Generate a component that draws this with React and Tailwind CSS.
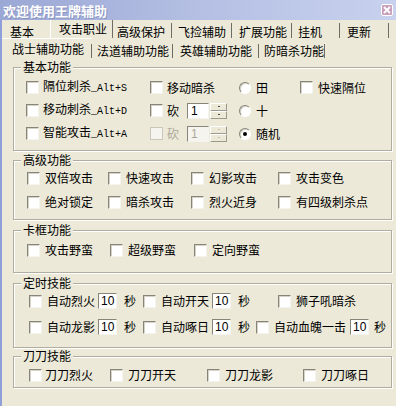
import React from 'react';

const Check = ({ disabled = false, className = '' }) => (
  <span
    className={`box-border block w-[13px] h-[13px] shrink-0 border ${
      disabled
        ? 'border-[#cac8bb] bg-[#f5f4ef]'
        : 'border-t-[#87857a] border-l-[#87857a] border-r-[#f4f3ee] border-b-[#f4f3ee] bg-white shadow-[inset_1px_1px_0_#d6d3c6]'
    } ${className}`}
  />
);

const Radio = ({ checked = false }) => (
  <span className="box-border flex w-[12px] h-[12px] shrink-0 items-center justify-center rounded-full border border-t-[#87857a] border-l-[#87857a] border-r-white border-b-white bg-white shadow-[inset_1px_1px_0_#d6d3c6]">
    {checked && <span className="block w-[4px] h-[4px] rounded-full bg-black" />}
  </span>
);

const Label = ({ children, gray = false, className = 'ml-[5px]' }) => (
  <span className={`${className} whitespace-nowrap leading-[12px] ${gray ? 'text-[#aca899]' : 'text-black'}`}>{children}</span>
);

const Alt = ({ children }) => (
  <span className="font-['Liberation_Mono',monospace] text-[10px]">{children}</span>
);

const NumBox = ({ value, className = '' }) => (
  <span
    className={`box-border flex items-center w-[19px] h-[16px] pl-[2px] bg-white border border-t-[#87857a] border-l-[#87857a] border-r-[#f4f3ee] border-b-[#f4f3ee] font-['Liberation_Sans',sans-serif] text-[12px] leading-[12px] ${className}`}
  >
    {value}
  </span>
);

const Spin = ({ disabled = false }) => (
  <span className="ml-[8px] flex items-center">
    <span
      className={`box-border flex items-center w-[22px] h-[16px] pl-[3px] border border-t-[#87857a] border-l-[#87857a] border-r-[#f4f3ee] border-b-[#f4f3ee] font-['Liberation_Sans',sans-serif] text-[12px] leading-[12px] ${
        disabled ? 'bg-[#f5f4ef] text-[#aca899]' : 'bg-white text-black'
      }`}
    >
      1
    </span>
    <span className="ml-[1px] flex flex-col w-[17px] h-[16px]">
      {[0, 1].map((i) => (
        <span
          key={i}
          className="box-border flex h-[8px] items-center justify-center border border-t-white border-l-white border-r-[#9d9a8c] border-b-[#9d9a8c] bg-[#ece9d8]"
        >
          <span className={`block w-[2px] h-[1px] ${disabled ? 'bg-[#c5c2b2]' : 'bg-[#4d4b44]'}`} />
        </span>
      ))}
    </span>
  </span>
);

const GroupBox = ({ title, height, className = '', children }) => (
  <div
    className={`box-border ml-[11px] w-[379px] border border-[#b0ad9e] shadow-[inset_1px_1px_0_#fff,1px_1px_0_#fff] ${className}`}
    style={{ height }}
  >
    <div className="-mt-[7px] ml-[7px] w-fit h-[12px] px-[2px] bg-[#ece9d8] leading-[12px]">{title}</div>
    {children}
  </div>
);

const Cell = ({ w, children }) => (
  <div className="flex items-center shrink-0" style={{ width: w }}>
    {children}
  </div>
);

const MainTab = ({ label, w, pl, selected, sep = true }) => (
  <div
    className={`box-border h-full shrink-0 ${selected ? 'pt-[3px] border-l border-l-white' : 'pt-[6px]'}`}
    style={{ width: w, paddingLeft: pl }}
  >
    <div className="relative h-full">
      <span className="leading-[12px] whitespace-nowrap">{label}</span>
      {sep && <span className="absolute right-0 top-[-3px] bottom-0 w-[1px] bg-[#6f6d63]" />}
    </div>
  </div>
);

export default function App() {
  return (
    <div className="w-[396px] h-[406px] overflow-hidden bg-[#ece9d8] font-['Noto_Sans_CJK_SC',sans-serif] text-[12px] leading-[12px] text-black">
      {/* title bar */}
      <div className="flex h-[20px] items-center justify-between bg-gradient-to-r from-[#9ba8d5] via-[#b4bfe3] to-[#c8d1ee] pl-[3px] pr-[3px]">
        <span className="text-[13px] font-bold leading-[13px] text-white [text-shadow:1px_1px_0_#8a94bf]">欢迎使用王牌辅助</span>
        <span className="box-border flex w-[12px] h-[12px] items-center justify-center rounded-[2px] border border-white bg-[#c9a0bd]">
          <svg width="8" height="8" viewBox="0 0 8 8">
            <path d="M1 1 L7 7 M7 1 L1 7" stroke="white" strokeWidth="1.8" />
          </svg>
        </span>
      </div>

      <div className="h-[386px] border-l-2 border-l-[#8f9fda]">
        {/* main tabs */}
        <div className="flex h-[18px]">
          <MainTab label="基本" w={48} pl={8} sep={false} />
          <MainTab label="攻击职业" w={63} pl={8} selected />
          <MainTab label="高级保护" w={59} pl={4} />
          <MainTab label="飞捡辅助" w={60} pl={6} />
          <MainTab label="扩展功能" w={60} pl={7} />
          <MainTab label="挂机" w={48} pl={6} />
          <MainTab label="更新" w={49} pl={7} />
        </div>

        {/* sub tabs */}
        <div className="flex h-[20px]">
          <div className="box-border h-full w-[90px] shrink-0 pt-[4px] pl-[10px] border-t border-t-white">
            <div className="relative h-full">
              <span className="leading-[12px]">战士辅助功能</span>
              <span className="absolute right-0 top-[1px] bottom-0 w-[1px] bg-[#6f6d63]" />
            </div>
          </div>
          {[
            ['法道辅助功能', 81, 5],
            ['英雄辅助功能', 86, 7],
            ['防暗杀功能', 66, 5],
          ].map(([label, w, pl]) => (
            <div key={label} className="box-border h-full shrink-0 pt-[7px]" style={{ width: w, paddingLeft: pl }}>
              <div className="relative h-full">
                <span className="leading-[12px] whitespace-nowrap">{label}</span>
                <span className="absolute right-0 top-[-1px] bottom-0 w-[1px] bg-[#6f6d63]" />
              </div>
            </div>
          ))}
        </div>

        {/* 基本功能 */}
        <GroupBox title="基本功能" height={84} className="mt-[9px]">
          <div className="mt-[3px] pl-[12px]">
            <div className="flex h-[23px] items-center">
              <Cell w={124}>
                <Check />
                <Label className="ml-[4px]">隔位刺杀<Alt>_Alt+S</Alt></Label>
              </Cell>
              <Cell w={89}>
                <Check />
                <Label className="ml-[4px]">移动暗杀</Label>
              </Cell>
              <Cell w={61}>
                <Radio />
                <Label>田</Label>
              </Cell>
              <Cell w={90}>
                <Check />
                <Label>快速隔位</Label>
              </Cell>
            </div>
            <div className="flex h-[23px] items-center">
              <Cell w={124}>
                <Check />
                <Label className="ml-[4px]">移动刺杀<Alt>_Alt+D</Alt></Label>
              </Cell>
              <Cell w={89}>
                <Check />
                <Label className="ml-[4px]">砍</Label>
                <Spin />
              </Cell>
              <Cell w={61}>
                <Radio />
                <Label>十</Label>
              </Cell>
            </div>
            <div className="flex h-[23px] items-center">
              <Cell w={124}>
                <Check />
                <Label className="ml-[4px]">智能攻击<Alt>_Alt+A</Alt></Label>
              </Cell>
              <Cell w={89}>
                <Check disabled />
                <Label className="ml-[4px]" gray>砍</Label>
                <Spin disabled />
              </Cell>
              <Cell w={61}>
                <Radio checked />
                <Label>随机</Label>
              </Cell>
            </div>
          </div>
        </GroupBox>

        {/* 高级功能 */}
        <GroupBox title="高级功能" height={60} className="mt-[9px]">
          <div className="pl-[13px]">
            <div className="flex h-[24px] items-center">
              <Cell w={81}><Check /><Label>双倍攻击</Label></Cell>
              <Cell w={83}><Check /><Label>快速攻击</Label></Cell>
              <Cell w={87}><Check /><Label>幻影攻击</Label></Cell>
              <Cell w={100}><Check /><Label>攻击变色</Label></Cell>
            </div>
            <div className="flex h-[24px] items-center">
              <Cell w={81}><Check /><Label>绝对锁定</Label></Cell>
              <Cell w={83}><Check /><Label>暗杀攻击</Label></Cell>
              <Cell w={87}><Check /><Label>烈火近身</Label></Cell>
              <Cell w={100}><Check /><Label>有四级刺杀点</Label></Cell>
            </div>
          </div>
        </GroupBox>

        {/* 卡框功能 */}
        <GroupBox title="卡框功能" height={43} className="mt-[10px]">
          <div className="mt-[2px] pl-[13px]">
            <div className="flex h-[24px] items-center">
              <Cell w={83}><Check /><Label>攻击野蛮</Label></Cell>
              <Cell w={84}><Check /><Label>超级野蛮</Label></Cell>
              <Cell w={100}><Check /><Label>定向野蛮</Label></Cell>
            </div>
          </div>
        </GroupBox>

        {/* 定时技能 */}
        <GroupBox title="定时技能" height={65} className="mt-[10px]">
          <div className="-mt-[1px] pl-[15px]">
            <div className="flex h-[26px] items-center">
              <Check />
              <Label>自动烈火</Label>
              <NumBox value="10" className="ml-[3px]" />
              <Label className="ml-[7px]">秒</Label>
              <Check className="ml-[7px]" />
              <Label>自动开天</Label>
              <NumBox value="10" className="ml-[3px]" />
              <Label className="ml-[7px]">秒</Label>
              <Check className="ml-[28px]" />
              <Label>狮子吼暗杀</Label>
            </div>
            <div className="flex h-[26px] items-center">
              <Check />
              <Label>自动龙影</Label>
              <NumBox value="10" className="ml-[3px]" />
              <Label className="ml-[7px]">秒</Label>
              <Check className="ml-[7px]" />
              <Label>自动啄日</Label>
              <NumBox value="10" className="ml-[3px]" />
              <Label className="ml-[7px]">秒</Label>
              <Check className="ml-[6px]" />
              <Label>自动血魄一击</Label>
              <NumBox value="10" className="ml-[4px]" />
              <Label className="ml-[5px]">秒</Label>
            </div>
          </div>
        </GroupBox>

        {/* 刀刀技能 */}
        <GroupBox title="刀刀技能" height={32} className="mt-[8px]">
          <div className="mt-[1px] pl-[15px]">
            <div className="flex h-[24px] items-center">
              <Cell w={81}><Check /><Label className="ml-[3px]">刀刀烈火</Label></Cell>
              <Cell w={97}><Check /><Label>刀刀开天</Label></Cell>
              <Cell w={96}><Check /><Label>刀刀龙影</Label></Cell>
              <Cell w={80}><Check /><Label>刀刀啄日</Label></Cell>
            </div>
          </div>
        </GroupBox>
      </div>
    </div>
  );
}
